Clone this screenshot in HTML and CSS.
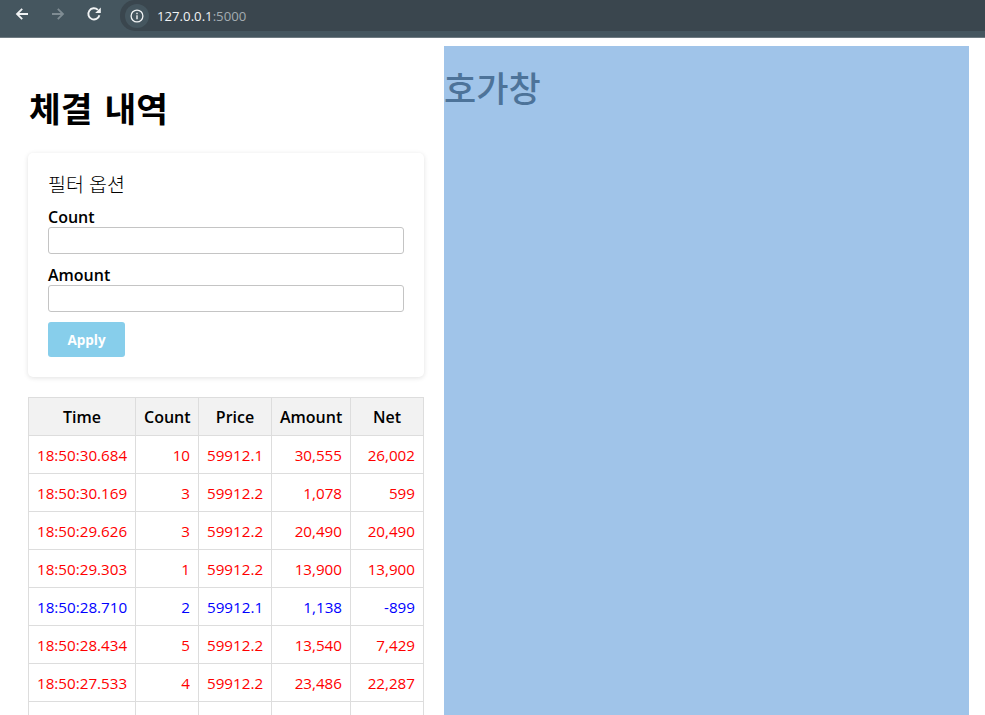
FILE: index.html
```html
<!DOCTYPE html>
<html lang="ko">
<head>
    <title>체결 내역</title>
    <meta charset="UTF-8">
    <meta name="viewport" content="width=device-width, initial-scale=1.0">
    <link rel="stylesheet" href="styles.css">
</head>
<body>
    <div class="toolbar">
        <svg class="nav-icon" viewBox="0 0 16 16"><path d="M14 8H3.5M8.2 2.8 3 8l5.2 5.2" fill="none" stroke="#f1f3f4" stroke-width="1.8"/></svg>
        <svg class="nav-icon" viewBox="0 0 16 16"><path d="M2 8h10.5M7.8 2.8 13 8l-5.2 5.2" fill="none" stroke="#7f8c93" stroke-width="1.8"/></svg>
        <svg class="nav-icon" viewBox="0 0 16 16"><path d="M13.4 9.2A5.6 5.6 0 1 1 11.9 3.9" fill="none" stroke="#f1f3f4" stroke-width="1.9"/><path d="M9.2 7h5.6V1.4z" fill="#f1f3f4"/></svg>
        <div class="omnibox">
            <span class="site-info">
                <svg class="info-icon" viewBox="0 0 14 14"><circle cx="7" cy="7" r="5.9" fill="none" stroke="#f1f3f4" stroke-width="1.3"/><path d="M6.3 6.2h1.4v4H6.3zM6.3 3.8h1.4v1.4H6.3z" fill="#f1f3f4"/></svg>
            </span>
            <span class="url">127.0.0.1<span class="url-port">:5000</span></span>
        </div>
    </div>

    <div class="page">
        <div class="left-col">
            <h1>체결 내역</h1>

            <form class="filter-card">
                <div class="filter-title">필터 옵션</div>
                <label for="count">Count</label>
                <input type="text" id="count">
                <label for="amount">Amount</label>
                <input type="text" id="amount">
                <button type="button">Apply</button>
            </form>

            <table class="trades">
                <thead>
                    <tr>
                        <th class="col-time">Time</th>
                        <th class="col-count">Count</th>
                        <th class="col-price">Price</th>
                        <th class="col-amount">Amount</th>
                        <th class="col-net">Net</th>
                    </tr>
                </thead>
                <tbody>
                    <tr class="buy"><td>18:50:30.684</td><td class="num">10</td><td>59912.1</td><td class="num">30,555</td><td class="num">26,002</td></tr>
                    <tr class="buy"><td>18:50:30.169</td><td class="num">3</td><td>59912.2</td><td class="num">1,078</td><td class="num">599</td></tr>
                    <tr class="buy"><td>18:50:29.626</td><td class="num">3</td><td>59912.2</td><td class="num">20,490</td><td class="num">20,490</td></tr>
                    <tr class="buy"><td>18:50:29.303</td><td class="num">1</td><td>59912.2</td><td class="num">13,900</td><td class="num">13,900</td></tr>
                    <tr class="sell"><td>18:50:28.710</td><td class="num">2</td><td>59912.1</td><td class="num">1,138</td><td class="num">-899</td></tr>
                    <tr class="buy"><td>18:50:28.434</td><td class="num">5</td><td>59912.2</td><td class="num">13,540</td><td class="num">7,429</td></tr>
                    <tr class="buy"><td>18:50:27.533</td><td class="num">4</td><td>59912.2</td><td class="num">23,486</td><td class="num">22,287</td></tr>
                    <tr><td>&nbsp;</td><td></td><td></td><td></td><td></td></tr>
                </tbody>
            </table>
        </div>

        <div class="orderbook">
            <h2>호가창</h2>
        </div>
    </div>
</body>
</html>
```

FILE: styles.css
```css
html {
    overflow: hidden;
}
body {
    font-family: "Open Sans", "Noto Sans CJK KR", sans-serif;
    margin: 0;
    padding: 0;
    color: #000000;
}
.toolbar {
    display: flex;
    align-items: flex-start;
    height: 37px;
    background-color: #45565f;
    border-bottom: 1px solid #6f7b82;
    padding-left: 14px;
}
.nav-icon {
    width: 16px;
    height: 16px;
    margin: 6px 20px 0 0;
    flex: none;
}
.omnibox {
    display: flex;
    align-items: center;
    flex: 1;
    height: 31px;
    margin-left: -2px;
    padding-left: 5px;
    background-color: #3a464e;
    border-radius: 15px 0 0 15px;
}
.site-info {
    display: flex;
    align-items: center;
    justify-content: center;
    width: 24px;
    height: 24px;
    border-radius: 50%;
    background-color: #45565f;
}
.info-icon {
    width: 14px;
    height: 14px;
}
.url {
    margin-left: 8px;
    font-size: 13.2px;
    color: #f1f3f4;
}
.url-port {
    color: #a3acb1;
}
.page {
    display: flex;
    align-items: stretch;
    padding: 8px 16px 0 8px;
}
.left-col {
    width: 396px;
    padding: 0 20px;
    flex: none;
}
h1 {
    font-size: 34.5px;
    font-weight: 700;
    line-height: 46px;
    word-spacing: 3px;
    margin: 40px 0 21px 1px;
}
.filter-card {
    display: flex;
    flex-direction: column;
    align-items: flex-start;
    padding: 20px;
    margin-bottom: 20px;
    background-color: #ffffff;
    border-radius: 5px;
    box-shadow: 0 1px 5px rgba(0, 0, 0, 0.12);
}
.filter-title {
    font-size: 19.5px;
    font-weight: 300;
    line-height: 24px;
    margin-bottom: 10px;
}
.filter-card label {
    font-size: 16px;
    font-weight: 600;
    line-height: 20px;
}
.filter-card input[type="text"] {
    width: 100%;
    height: 27px;
    box-sizing: border-box;
    border: 1px solid #c4c4c4;
    border-radius: 3px;
    margin-bottom: 11px;
}
.filter-card button {
    background-color: #87ceeb;
    color: #ffffff;
    font-family: inherit;
    font-size: 13.5px;
    font-weight: 700;
    width: 77px;
    height: 35px;
    border: none;
    border-radius: 3px;
    margin-top: -1px;
    cursor: pointer;
}
.trades {
    width: 396px;
    table-layout: fixed;
    border-collapse: collapse;
    font-size: 15.2px;
}
.trades th,
.trades td {
    border: 1px solid #dddddd;
    height: 37px;
    padding: 0 8px;
    box-sizing: content-box;
}
.trades th {
    background-color: #f2f2f2;
    font-size: 16px;
    font-weight: 600;
    text-align: center;
}
.col-time {
    width: 90px;
}
.col-count {
    width: 46px;
}
.col-price {
    width: 56px;
}
.col-amount {
    width: 62px;
}
.col-net {
    width: 56px;
}
.trades td {
    text-align: left;
}
.trades td.num {
    text-align: right;
}
.buy {
    color: #ff0000;
}
.sell {
    color: #0000ff;
}
.orderbook {
    flex: 1;
    background-color: #a0c4e9;
    height: 700px;
}
.orderbook h2 {
    font-size: 35px;
    font-weight: 500;
    line-height: 46px;
    margin: 20px 0 0 0;
    color: #4d7399;
}
```
